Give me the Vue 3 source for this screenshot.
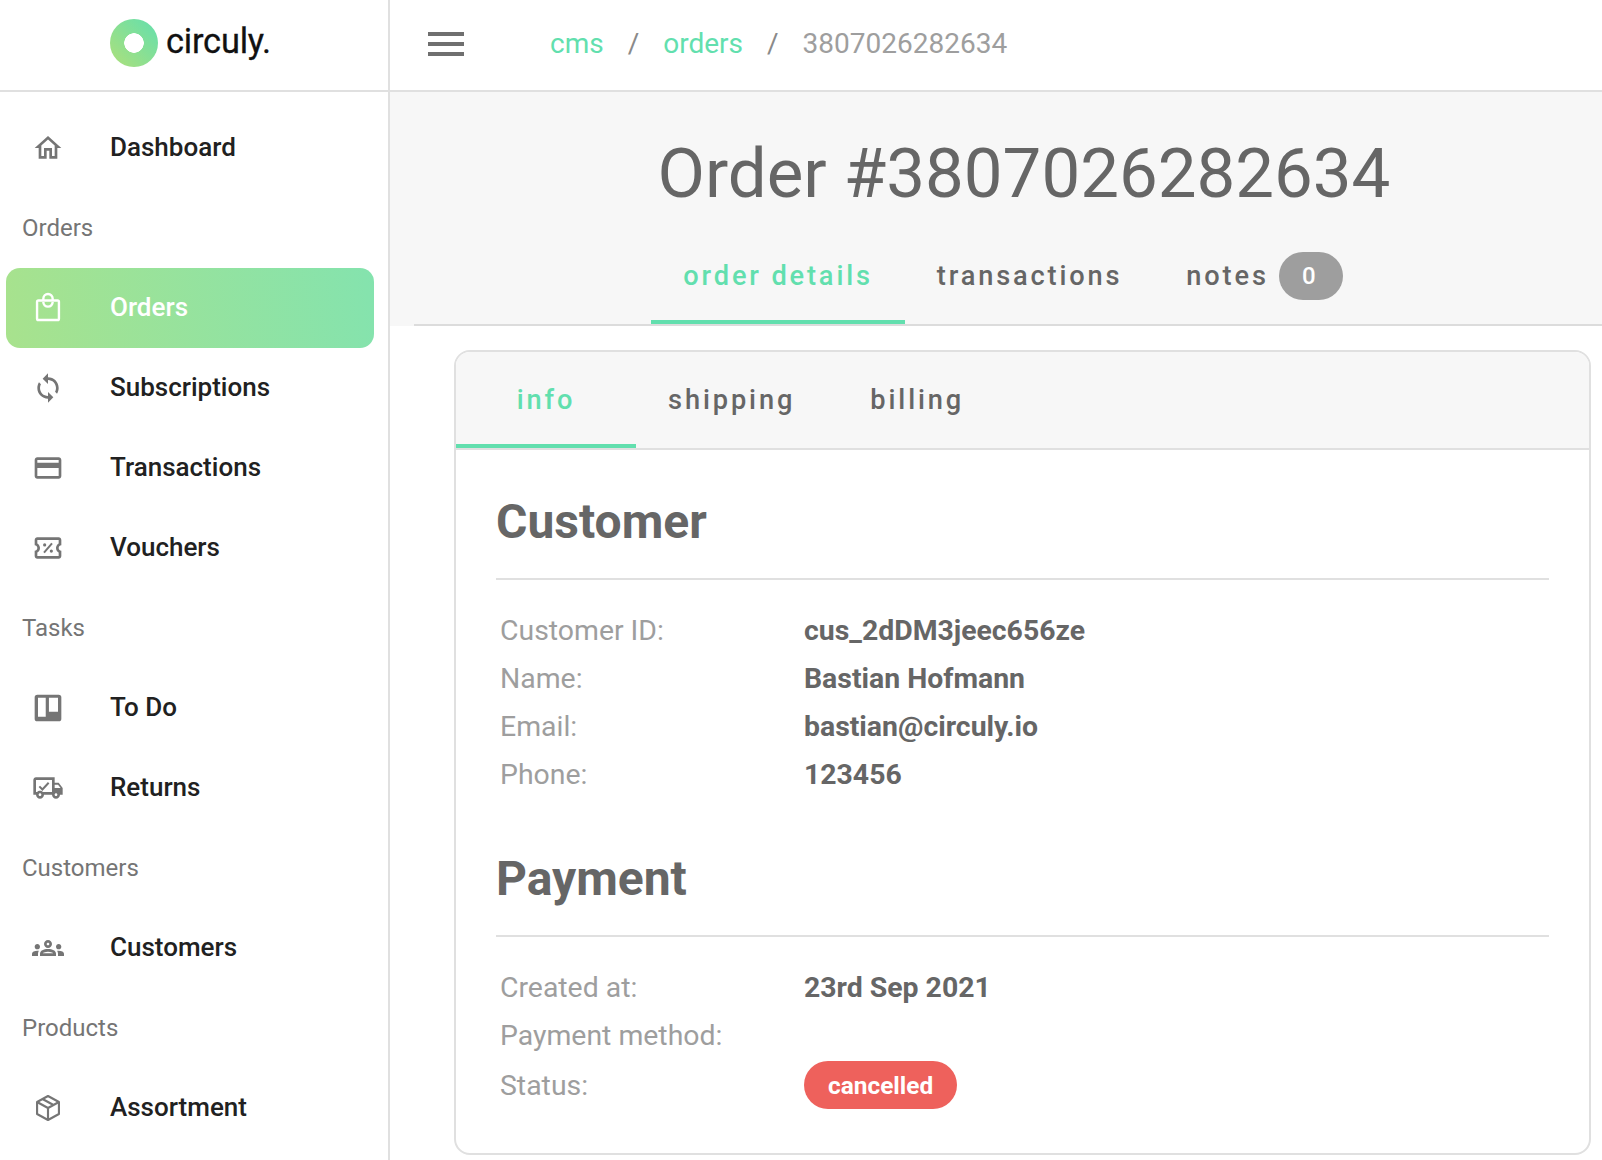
<script setup>
const nav = [
  { type: 'item', label: 'Dashboard', icon: 'home' },
  { type: 'head', label: 'Orders' },
  { type: 'item', label: 'Orders', icon: 'bag', active: true },
  { type: 'item', label: 'Subscriptions', icon: 'sync' },
  { type: 'item', label: 'Transactions', icon: 'card' },
  { type: 'item', label: 'Vouchers', icon: 'voucher' },
  { type: 'head', label: 'Tasks' },
  { type: 'item', label: 'To Do', icon: 'board' },
  { type: 'item', label: 'Returns', icon: 'truck' },
  { type: 'head', label: 'Customers' },
  { type: 'item', label: 'Customers', icon: 'people' },
  { type: 'head', label: 'Products' },
  { type: 'item', label: 'Assortment', icon: 'box' }
]
const customer = [
  ['Customer ID:', 'cus_2dDM3jeec656ze'],
  ['Name:', 'Bastian Hofmann'],
  ['Email:', 'bastian@circuly.io'],
  ['Phone:', '123456']
]
</script>

<template>
  <div class="page">
    <aside class="side">
      <div class="brand">
        <span class="ring"></span>
        <span class="brandname">circuly.</span>
      </div>
      <nav class="nav">
        <template v-for="(n, i) in nav" :key="i">
          <div v-if="n.type === 'head'" class="head">{{ n.label }}</div>
          <div v-else class="item" :class="{ active: n.active }">
            <span class="ico">
              <svg viewBox="0 0 24 24" width="32" height="32" fill="currentColor">
                <path v-if="n.icon === 'home'" d="M12 5.69l5 4.5V18h-2v-6H9v6H7v-7.81l5-4.5M12 3L2 12h3v8h6v-6h2v6h6v-8h3L12 3z" />
                <g v-else-if="n.icon === 'bag'" fill="none" stroke="currentColor" stroke-width="1.800" stroke-linejoin="round">
                  <rect x="3.800" y="6.400" width="16.400" height="14.600" rx="1" />
                  <path d="M8.500 6.400V5a3.500 3.500 0 0 1 7 0v1.400" />
                  <path d="M8.500 7.500a3.500 3.500 0 0 0 7 0" />
                </g>
                <path v-else-if="n.icon === 'sync'" d="M12 4V1L8 5l4 4V6c3.310 0 6 2.690 6 6 0 1.010-.25 1.970-.7 2.800l1.460 1.460C19.540 15.030 20 13.570 20 12c0-4.420-3.580-8-8-8zm0 14c-3.310 0-6-2.690-6-6 0-1.010.25-1.970.7-2.800L5.240 7.740C4.460 8.970 4 10.430 4 12c0 4.420 3.580 8 8 8v3l4-4-4-4v3z" />
                <path v-else-if="n.icon === 'card'" d="M20 4H4c-1.110 0-1.990.89-1.990 2L2 18c0 1.110.89 2 2 2h16c1.110 0 2-.89 2-2V6c0-1.110-.89-2-2-2zm0 14H4v-6h16v6zm0-10H4V6h16v2z" />
                <g v-else-if="n.icon === 'voucher'">
                  <path d="M22 10V6c0-1.110-.9-2-2-2H4c-1.100 0-1.990.89-1.990 2v4c1.100 0 1.990.9 1.990 2s-.89 2-2 2v4c0 1.100.9 2 2 2h16c1.100 0 2-.9 2-2v-4c-1.100 0-2-.9-2-2s.9-2 2-2zm-2-1.460c-1.190.69-2 1.990-2 3.460s.81 2.770 2 3.460V18H4v-2.540c1.190-.69 2-1.990 2-3.460 0-1.480-.8-2.770-1.990-3.460L4 6h16v2.540z" />
                  <path d="M9 15.500 15 8.500" fill="none" stroke="currentColor" stroke-width="1.500" />
                  <circle cx="9.500" cy="9.700" r="1.200" />
                  <circle cx="14.500" cy="14.300" r="1.200" />
                </g>
                <path v-else-if="n.icon === 'board'" fill-rule="evenodd" d="M4 2h16a2 2 0 0 1 2 2v16a2 2 0 0 1-2 2H4a2 2 0 0 1-2-2V4a2 2 0 0 1 2-2zm.500 2.300v14.200h5.800V4.300zm8.200 0v10.500h6.800V4.300z" />
                <g v-else-if="n.icon === 'truck'">
                  <path d="M20 8h-3V4H3c-1.100 0-2 .9-2 2v11h2c0 1.660 1.340 3 3 3s3-1.340 3-3h6c0 1.660 1.340 3 3 3s3-1.340 3-3h2v-5l-3-4zm-.5 1.500l1.960 2.500H17V9.500h2.500zM6 18c-.55 0-1-.45-1-1s.45-1 1-1 1 .45 1 1-.45 1-1 1zm2.220-3c-.55-.61-1.330-1-2.220-1s-1.670.39-2.220 1H3V6h12v9H8.220zM18 18c-.55 0-1-.45-1-1s.45-1 1-1 1 .45 1 1-.45 1-1 1z" />
                  <path d="m5.500 10.800 2.300 2.300 4.700-5" fill="none" stroke="currentColor" stroke-width="1.500" />
                </g>
                <path v-else-if="n.icon === 'people'" d="M4 13c1.100 0 2-.9 2-2s-.9-2-2-2-2 .9-2 2 .9 2 2 2zm1.130 1.100C4.760 14.040 4.390 14 4 14c-.99 0-1.930.21-2.780.58C.48 14.900 0 15.620 0 16.430V18h4.500v-1.610C4.500 15.560 4.730 14.780 5.130 14.100zM20 13c1.100 0 2-.9 2-2s-.9-2-2-2-2 .9-2 2 .9 2 2 2zM24 16.430c0-.81-.48-1.530-1.220-1.850C21.930 14.210 20.990 14 20 14c-.39 0-.76.04-1.130.1.400.68.630 1.460.630 2.290V18H24V16.430zM16.240 13.650c-1.170-.52-2.610-.9-4.240-.9-1.630 0-3.070.39-4.240.9C6.680 14.130 6 15.210 6 16.390V18h12v-1.610C18 15.210 17.320 14.130 16.240 13.650zM8.070 16c.09-.23.13-.39.91-.69.97-.38 1.990-.56 3.020-.56s2.050.18 3.020.56c.77.3.81.46.91.69H8.070zM12 8c.55 0 1 .45 1 1s-.45 1-1 1-1-.45-1-1 .45-1 1-1M12 6c-1.660 0-3 1.340-3 3s1.340 3 3 3 3-1.340 3-3S13.660 6 12 6z" />
                <g v-else-if="n.icon === 'box'" fill="none" stroke="currentColor" stroke-width="1.600" stroke-linejoin="round">
                  <path d="M12 3 20.200 7.500v9L12 21 3.800 16.500v-9z" />
                  <path d="M3.800 7.500 12 12l8.200-4.500M12 12v9M7.900 5.250l8.200 4.500" />
                </g>
              </svg>
            </span>
            <span class="label">{{ n.label }}</span>
          </div>
        </template>
      </nav>
    </aside>

    <main class="main">
      <header class="top">
        <span class="burger"><i></i><i></i><i></i></span>
        <div class="crumbs">
          <span class="link">cms</span><span class="sep">/</span>
          <span class="link">orders</span><span class="sep">/</span>
          <span class="cur">3807026282634</span>
        </div>
      </header>

      <section class="hero">
        <h1>Order #3807026282634</h1>
        <div class="tabs">
          <span class="tab on">order details</span>
          <span class="tab">transactions</span>
          <span class="tab last">notes<b class="count">0</b></span>
        </div>
      </section>

      <section class="body">
        <div class="card">
          <div class="subtabs">
            <span class="stab on">info</span>
            <span class="stab">shipping</span>
            <span class="stab">billing</span>
          </div>
          <div class="content">
            <h2>Customer</h2>
            <div class="rows">
              <div v-for="r in customer" :key="r[0]" class="row">
                <span class="k">{{ r[0] }}</span><span class="v">{{ r[1] }}</span>
              </div>
            </div>
            <h2 class="second">Payment</h2>
            <div class="rows">
              <div class="row"><span class="k">Created at:</span><span class="v">23rd Sep 2021</span></div>
              <div class="row"><span class="k">Payment method:</span><span class="v"></span></div>
              <div class="row tall"><span class="k">Status:</span><span class="v"><span class="pill">cancelled</span></span></div>
            </div>
          </div>
        </div>
      </section>
    </main>
  </div>
</template>

<style>
html, body { margin: 0; background: #fff; overflow: hidden; }
</style>

<style scoped>
.page { display: flex; width: 1602px; height: 1160px; overflow: hidden; font-family: Roboto, sans-serif; background: #fff; }
.side { width: 388px; flex: none; border-right: 2px solid #e0e0e0; }
.brand { height: 86px; padding: 0 0 4px 110px; border-bottom: 2px solid #e0e0e0; display: flex; align-items: center; gap: 8px; }
.ring { width: 48px; height: 48px; border-radius: 50%; background: radial-gradient(circle at center, #fff 0 9.500px, transparent 10px), linear-gradient(45deg, #aee07a, #62dfae); }
.brandname { font-size: 34.400px; font-weight: 400; color: #111; letter-spacing: -0.2px; padding-bottom: 4px; -webkit-text-stroke: 0.3px #111; }
.nav { padding: 16px 14px 0 6px; }
.item { height: 80px; display: flex; align-items: center; border-radius: 14px; color: #212121; }
.ico { width: 78px; padding-left: 26px; display: flex; color: #757575; flex: none; }
.label { font-size: 26px; font-weight: 500; padding-bottom: 2px; }
.item.active { background: linear-gradient(80deg, #a8e28d, #84e3ae); color: #fff; }
.item.active .ico { color: #fff; }
.head { height: 80px; display: flex; align-items: center; padding-left: 16px; font-size: 24px; color: #757575; }
.main { flex: 1; min-width: 0; }
.top { height: 88px; padding: 0 0 2px 38px; border-bottom: 2px solid #e0e0e0; display: flex; align-items: center; }
.burger { width: 36px; display: flex; flex-direction: column; gap: 6px; }
.burger i { display: block; height: 4px; background: #6f6f6f; }
.crumbs { margin-left: 86px; display: flex; align-items: center; font-size: 28px; font-weight: 400; padding-bottom: 2px; }
.link { color: #62dfae; }
.sep { color: #8a8a8a; margin: 0 24px; }
.cur { color: #9e9e9e; }
.hero { background: #f7f7f7; height: 234px; padding-left: 56px; display: flex; flex-direction: column; align-items: center; position: relative; }
.hero::after { content: ''; position: absolute; left: 24px; right: 0; bottom: 0; height: 2px; background: #dcdcdc; }
h1 { margin: 0; font-size: 69px; font-weight: 400; color: #666; line-height: 84px; padding-top: 40px; }
.tabs { display: flex; height: 96px; margin-top: 12px; }
.tab { padding: 0 32px; font-size: 27.200px; font-weight: 500; letter-spacing: 2.850px; color: #666; display: flex; align-items: center; }
.tab.last { padding-right: 54px; }
.tab.on { color: #62dfae; box-shadow: inset 0 -4px 0 #62dfae; }
.count { margin-left: 10px; width: 64px; height: 48px; box-sizing: border-box; padding-right: 4px; border-radius: 24px; background: #9e9e9e; color: #fff; font-size: 24px; font-weight: 500; letter-spacing: 0; display: flex; align-items: center; justify-content: center; }
.body { padding: 24px 11px 0 64px; }
.card { border: 2px solid #e0e0e0; border-radius: 16px; overflow: hidden; }
.subtabs { background: #f7f7f7; height: 96px; border-bottom: 2px solid #e0e0e0; display: flex; }
.stab { padding: 0 32px; min-width: 116px; font-size: 27.200px; font-weight: 500; letter-spacing: 2.900px; color: #666; display: flex; align-items: center; justify-content: center; }
.stab.on { color: #62dfae; box-shadow: inset 0 -4px 0 #62dfae; }
.content { padding: 41px 40px 42px; }
h2 { margin: 0; font-size: 48px; font-weight: 700; color: #666; line-height: 62px; padding-bottom: 25px; border-bottom: 2px solid #e0e0e0; }
h2.second { margin-top: 50px; }
.rows { padding: 26px 4px 0; }
.row { display: flex; height: 48px; align-items: center; font-size: 28.400px; }
.row.tall { height: 52px; }
.k { width: 304px; color: #9e9e9e; }
.v { color: #666; font-weight: 700; }
.pill { display: inline-flex; align-items: center; height: 48px; padding: 0 24px; border-radius: 24px; background: #ee615c; color: #fff; font-size: 24.400px; font-weight: 700; }
</style>
